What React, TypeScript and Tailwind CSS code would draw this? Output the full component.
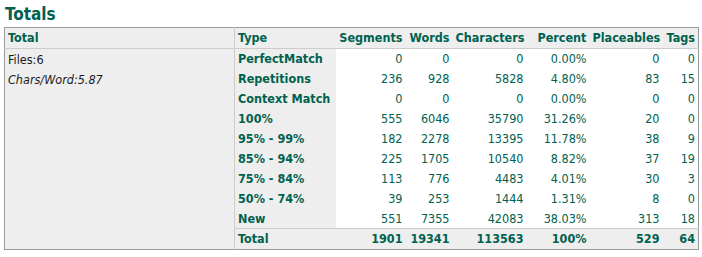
import React from 'react'

const rows = [
  { type: 'PerfectMatch', seg: '0', words: '0', chars: '0', pct: '0.00%', plc: '0', tags: '0' },
  { type: 'Repetitions', seg: '236', words: '928', chars: '5828', pct: '4.80%', plc: '83', tags: '15' },
  { type: 'Context Match', seg: '0', words: '0', chars: '0', pct: '0.00%', plc: '0', tags: '0' },
  { type: '100%', seg: '555', words: '6046', chars: '35790', pct: '31.26%', plc: '20', tags: '0' },
  { type: '95% - 99%', seg: '182', words: '2278', chars: '13395', pct: '11.78%', plc: '38', tags: '9' },
  { type: '85% - 94%', seg: '225', words: '1705', chars: '10540', pct: '8.82%', plc: '37', tags: '19' },
  { type: '75% - 84%', seg: '113', words: '776', chars: '4483', pct: '4.01%', plc: '30', tags: '3' },
  { type: '50% - 74%', seg: '39', words: '253', chars: '1444', pct: '1.31%', plc: '8', tags: '0' },
  { type: 'New', seg: '551', words: '7355', chars: '42083', pct: '38.03%', plc: '313', tags: '18' },
]

const font = { fontFamily: '"DejaVu Sans Condensed", Tahoma, "DejaVu Sans", sans-serif' }

export default function App() {
  return (
    <div className="bg-white w-[702px] h-[257px] text-[12.5px] text-[#00614f]" style={font}>
      {/* title */}
      <div className="h-[27px] pl-[5px] pt-[4px] text-[17px] font-bold leading-[20px]">Totals</div>

      <table className="ml-[4px] w-[694px] border border-[#9a9a9a] border-collapse table-fixed">
        <colgroup>
          <col className="w-[230px]" />
          <col className="w-[101px]" />
          <col className="w-[70px]" />
          <col className="w-[47px]" />
          <col className="w-[74px]" />
          <col className="w-[63px]" />
          <col className="w-[73px]" />
          <col className="w-[36px]" />
        </colgroup>
        <thead>
          <tr className="h-[20px] bg-[#eeeeee] border-b border-[#cccccc] font-bold">
            <th className="text-left px-[3px] pt-[1px] border-r border-[#cccccc]">Total</th>
            <th className="text-left px-[3px] pt-[1px]">Type</th>
            <th className="text-right px-[3px] pt-[1px]">Segments</th>
            <th className="text-right px-[3px] pt-[1px]">Words</th>
            <th className="text-right px-[3px] pt-[1px]">Characters</th>
            <th className="text-right px-[3px] pt-[1px]">Percent</th>
            <th className="text-right px-[3px] pt-[1px]">Placeables</th>
            <th className="text-right px-[3px] pt-[1px]">Tags</th>
          </tr>
        </thead>
        <tbody>
          {rows.map((r, i) => (
            <tr key={r.type} className="h-[20px]">
              {i === 0 && (
                <td rowSpan={10} className="align-top bg-[#eeeeee] border-r border-[#cccccc] px-[3px] pt-[1px] text-[#1a1a1a] leading-[20px]">
                  <div>Files:6</div>
                  <div className="italic">Chars/Word:5.87</div>
                </td>
              )}
              <td className="bg-[#eeeeee] px-[3px] pt-[1px] font-bold whitespace-nowrap">{r.type}</td>
              <td className="text-right px-[3px] pt-[1px]">{r.seg}</td>
              <td className="text-right px-[3px] pt-[1px]">{r.words}</td>
              <td className="text-right px-[3px] pt-[1px]">{r.chars}</td>
              <td className="text-right px-[3px] pt-[1px]">{r.pct}</td>
              <td className="text-right px-[3px] pt-[1px]">{r.plc}</td>
              <td className="text-right px-[3px] pt-[1px]">{r.tags}</td>
            </tr>
          ))}
          <tr className="h-[21px] bg-[#eeeeee] border-t border-[#cccccc] font-bold">
            <td className="px-[3px] pt-[1px]">Total</td>
            <td className="text-right px-[3px] pt-[1px]">1901</td>
            <td className="text-right px-[3px] pt-[1px]">19341</td>
            <td className="text-right px-[3px] pt-[1px]">113563</td>
            <td className="text-right px-[3px] pt-[1px]">100%</td>
            <td className="text-right px-[3px] pt-[1px]">529</td>
            <td className="text-right px-[3px] pt-[1px]">64</td>
          </tr>
        </tbody>
      </table>
    </div>
  )
}
